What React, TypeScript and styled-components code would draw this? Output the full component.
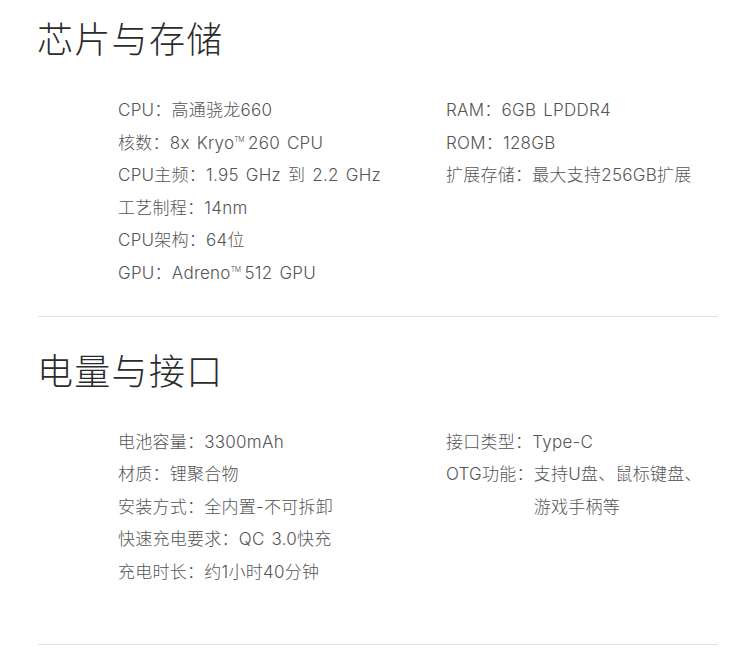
import styled, { createGlobalStyle } from 'styled-components'

const GlobalStyle = createGlobalStyle`
  html, body {
    margin: 0;
    padding: 0;
    background: #fff;
  }
  body {
    font-family: Inter, "Noto Sans CJK SC", "Noto Sans", sans-serif;
    -webkit-font-smoothing: antialiased;
  }
`

const Page = styled.div`
  width: 750px;
  display: flex;
  flex-direction: column;
`

const Section = styled.section<{ top: number; bottom: number }>`
  padding: ${p => p.top}px 0 ${p => p.bottom}px;
  display: flex;
  flex-direction: column;
`

const Title = styled.h2`
  margin: 0 0 0 37px;
  font-family: "Noto Sans CJK SC", sans-serif;
  font-size: 36px;
  line-height: 44px;
  font-weight: 300;
  color: #2b2b2b;
  letter-spacing: 1.3px;
`

const Specs = styled.div`
  display: grid;
  grid-template-columns: 328px 1fr;
  padding-left: 118px;
  margin-top: 35px;
`

const Column = styled.ul`
  margin: 0;
  padding: 0;
  list-style: none;
  display: flex;
  flex-direction: column;
`

const Row = styled.li`
  display: flex;
  font-size: 17px;
  line-height: 32.6px;
  font-weight: 300;
  color: #555;
  letter-spacing: 0.25px;
  word-spacing: 2px;
  white-space: nowrap;
`

const Label = styled.span`
  flex: none;
`

const Value = styled.span<{ wrap?: boolean }>`
  white-space: ${p => (p.wrap ? 'normal' : 'nowrap')};
  max-width: ${p => (p.wrap ? '176px' : 'none')};
`

const Tm = styled.sup`
  font-size: 7px;
  vertical-align: 7px;
  line-height: 0;
  letter-spacing: -0.5px;
  margin-right: 4px;
`

const Divider = styled.hr`
  margin: 0 32px 0 38px;
  border: none;
  height: 1px;
  background: #e2e2e2;
`

type Spec = { label: string; value: React.ReactNode; wrap?: boolean }

const chipLeft: Spec[] = [
  { label: 'CPU：', value: '高通骁龙660' },
  { label: '核数：', value: <>8x Kryo<Tm>TM</Tm>260 CPU</> },
  { label: 'CPU主频：', value: '1.95 GHz 到 2.2 GHz' },
  { label: '工艺制程：', value: '14nm' },
  { label: 'CPU架构：', value: '64位' },
  { label: 'GPU：', value: <>Adreno<Tm>TM</Tm>512 GPU</> },
]

const chipRight: Spec[] = [
  { label: 'RAM：', value: '6GB LPDDR4' },
  { label: 'ROM：', value: '128GB' },
  { label: '扩展存储：', value: '最大支持256GB扩展' },
]

const powerLeft: Spec[] = [
  { label: '电池容量：', value: '3300mAh' },
  { label: '材质：', value: '锂聚合物' },
  { label: '安装方式：', value: '全内置-不可拆卸' },
  { label: '快速充电要求：', value: 'QC 3.0快充' },
  { label: '充电时长：', value: '约1小时40分钟' },
]

const powerRight: Spec[] = [
  { label: '接口类型：', value: 'Type-C' },
  { label: 'OTG功能：', value: '支持U盘、鼠标键盘、游戏手柄等', wrap: true },
]

const SpecList = ({ items }: { items: Spec[] }) => (
  <Column>
    {items.map(item => (
      <Row key={item.label}>
        <Label>{item.label}</Label>
        <Value wrap={item.wrap}>{item.value}</Value>
      </Row>
    ))}
  </Column>
)

const App = () => {
  return (
    <Page>
      <GlobalStyle />
      <Section top={15} bottom={26}>
        <Title>芯片与存储</Title>
        <Specs>
          <SpecList items={chipLeft} />
          <SpecList items={chipRight} />
        </Specs>
      </Section>
      <Divider />
      <Section top={30} bottom={55}>
        <Title>电量与接口</Title>
        <Specs>
          <SpecList items={powerLeft} />
          <SpecList items={powerRight} />
        </Specs>
      </Section>
      <Divider />
    </Page>
  )
}

export default App
